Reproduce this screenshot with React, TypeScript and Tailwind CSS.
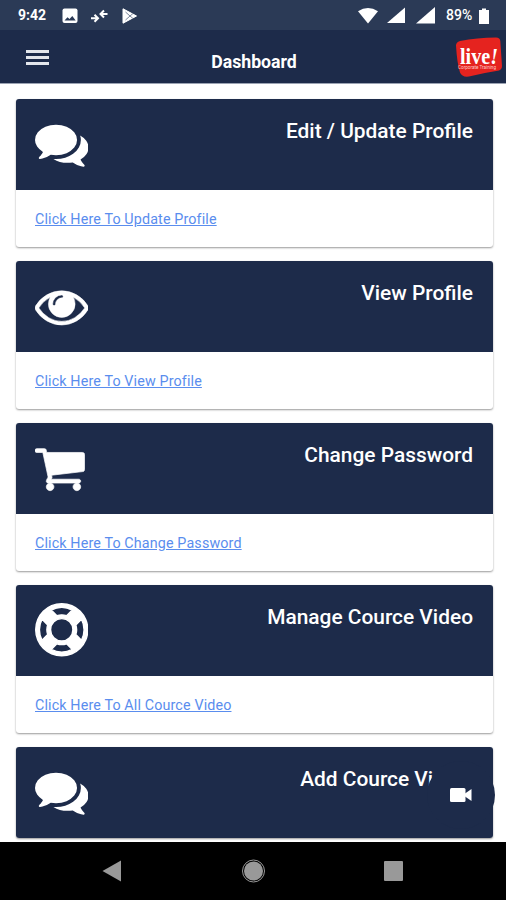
import type { ReactNode } from 'react';

type CardProps = {
  title: string;
  link?: string;
  icon: ReactNode;
};

type GlyphProps = {
  d: string;
  viewBox?: string;
  strokeWidth?: number;
};

function Glyph({ d, viewBox = '0 0 1792 1792', strokeWidth = 0 }: GlyphProps) {
  return (
    <svg viewBox={viewBox} className="size-[53.5px] shrink-0" fill="currentColor">
      <path d={d} stroke="currentColor" strokeWidth={strokeWidth} />
    </svg>
  );
}

const comments =
  'M1408 768q0 139-94 257t-256.5 186.5-353.5 68.5q-86 0-176-16-124 88-278 128-36 9-86 16h-3q-11 0-20.5-8t-11.5-21q-1-3-1-6.5t.5-6.5 2-6l2.5-5 3.5-5.5 4-5 4.5-5 4-4.5q5-6 23-25t26-29.5 22.5-29 25-38.5 20.5-44q-124-72-195-177t-71-224q0-139 94-257t256.5-186.5 353.5-68.5 353.5 68.5 256.5 186.5 94 257zm384 256q0 120-71 224.5t-195 176.5q10 24 20.5 44t25 38.5 22.5 29 26 29.5 23 25q1 1 4 4.5t4.5 5 4 5 3.5 5.5l2.5 5 2 6 .5 6.5-1 6.5q-3 14-13 22t-22 7q-50-7-86-16-154-40-278-128-90 16-176 16-271 0-472-132 58 4 88 4 161 0 309-45t264-129q125-92 192-212t67-254q0-77-23-152 129 71 204 178t75 230z';
const eye =
  'M1664 960q-152-236-381-353 61 104 61 225 0 185-131.5 316.5t-316.5 131.5-316.5-131.5-131.5-316.5q0-121 61-225-229 117-381 353 133 205 333.5 326.5t434.5 121.5 434.5-121.5 333.5-326.5zm-720-384q0-20-14-34t-34-14q-125 0-214.5 89.5t-89.5 214.5q0 20 14 34t34 14 34-14 14-34q0-86 61-147t147-61q20 0 34-14t14-34zm848 384q0 34-20 69-140 230-376.5 368.5t-499.5 138.5-499.5-139-376.5-368q-20-35-20-69t20-69q140-229 376.5-368t499.5-139 499.5 139 376.5 368q20 35 20 69z';
const cart =
  'M704 1536q0 52-38 90t-90 38-90-38-38-90 38-90 90-38 90 38 38 90zm896 0q0 52-38 90t-90 38-90-38-38-90 38-90 90-38 90 38 38 90zm128-1088v512q0 24-16.5 42.5t-40.5 21.5l-1044 122q13 60 13 70 0 16-24 64h920q26 0 45 19t19 45-19 45-45 19h-1024q-26 0-45-19t-19-45q0-11 8-31.5t16-36 21.5-40 15.5-29.5l-177-823h-204q-26 0-45-19t-19-45 19-45 45-19h256q16 0 28.5 6.5t19.5 15.5 13 24.5 8 26 5.5 29.5 4.5 26h1201q26 0 45 19t19 45z';
const lifeRing =
  'M896 0q182 0 348 71t286 191 191 286 71 348-71 348-191 286-286 191-348 71-348-71-286-191-191-286-71-348 71-348 191-286 286-191 348-71zm0 128q-190 0-361 90l194 194q82-28 167-28t167 28l194-194q-171-90-361-90zm-678 1129l194-194q-28-82-28-167t28-167l-194-194q-90 171-90 361t90 361zm678 407q190 0 361-90l-194-194q-82 28-167 28t-167-28l-194 194q171 90 361 90zm0-384q159 0 271.5-112.5t112.5-271.5-112.5-271.5-271.5-112.5-271.5 112.5-112.5 271.5 112.5 271.5 271.5 112.5zm484-217l194 194q90-171 90-361t-90-361l-194 194q28 82 28 167t-28 167z';

const cards: CardProps[] = [
  { title: 'Edit / Update Profile', link: 'Click Here To Update Profile', icon: <Glyph d={comments} /> },
  { title: 'View Profile', link: 'Click Here To View Profile', icon: <Glyph d={eye} viewBox="0 -8 1792 1792" strokeWidth={16} /> },
  { title: 'Change Password', link: 'Click Here To Change Password', icon: <Glyph d={cart} viewBox="70 0 1792 1792" strokeWidth={24} /> },
  { title: 'Manage Cource Video', link: 'Click Here To All Cource Video', icon: <Glyph d={lifeRing} viewBox="-24 -24 1840 1840" strokeWidth={48} /> },
  { title: 'Add Cource Video', icon: <Glyph d={comments} /> },
];

function Card({ title, link, icon }: CardProps) {
  return (
    <section className="group shrink-0 overflow-hidden rounded-[3px] bg-white shadow-[0_1px_2px_rgba(0,0,0,0.4)]">
      <div className="flex h-[90.6px] items-start justify-between bg-[#1d2b4a] pt-[18px] pr-5 pl-[18.5px] text-white group-last:pr-[25px]">
        {icon}
        <h2 className="text-[20.9px] leading-7 font-medium whitespace-nowrap">{title}</h2>
      </div>
      {link ? (
        <div className="flex h-[57.2px] items-center pt-px pl-[19px]">
          <a href="#" className="text-[14.3px] leading-5 tracking-[0.14px] text-[#5a8dee] underline">
            {link}
          </a>
        </div>
      ) : null}
    </section>
  );
}

function StatusBar() {
  return (
    <div className="flex h-[30px] shrink-0 items-center justify-between bg-[#2b3a56] pt-px pr-[17px] pl-[18px] text-white">
      <div className="flex items-center">
        <span className="w-[44px] text-[14px] font-bold">9:42</span>
        <svg width="16" height="16" viewBox="0 0 16 16">
          <rect x="0.5" y="0.5" width="15" height="14.5" rx="2" fill="white" />
          <path d="M2.5 12.5 5.5 9.2l2 1.8L10.3 8l3.4 4.5z" fill="#2b3a56" />
        </svg>
        <svg width="17" height="16" viewBox="0 0 17 16" className="ml-[13px]" fill="none" stroke="white" strokeWidth="2">
          <path d="M0 10.2h6M3.5 6.7 7 10.2l-3.5 3.5M16.5 6h-6M13 2.500 9.500 6l3.500 3.500" />
        </svg>
        <svg width="17" height="16" viewBox="0 0 17 16" className="ml-[13px]">
          <path d="M2 .8 15.500 8 2 15.200z" fill="white" stroke="white" strokeLinejoin="round" />
          <path d="M4.500 4 9 8l-4.500 4M9 8l3-2.500M9 8l3 2.500" stroke="#7b879c" strokeWidth="1" fill="none" />
        </svg>
      </div>
      <div className="flex items-center">
        <svg width="20" height="16" viewBox="0 0 20 16" fill="white">
          <path d="M0 3.2Q10-3.2 20 3.2L10 15.5z" />
        </svg>
        <svg width="18" height="17" viewBox="0 0 19 17" className="ml-[9px]" fill="white">
          <path d="M0 16.5 19 0v16.5z" />
        </svg>
        <svg width="19" height="17" viewBox="0 0 19 17" className="ml-[11px]" fill="white">
          <path d="M0 16.5 19 0v16.5z" />
        </svg>
        <span className="ml-[11px] w-[33px] text-[14px] font-medium">89%</span>
        <svg width="10" height="16" viewBox="0 0 10 16" fill="white">
          <path d="M3 .5h4V2h3v14H0V2h3z" />
        </svg>
      </div>
    </div>
  );
}

function Logo() {
  return (
    <svg width="48" height="40" viewBox="0 0 48 40">
      <path d="M5 4Q22 .5 41 .5q4 0 4.300 3.500L47 29q0 3-3 4.500Q28 36 14 39.500q-7 1-9-4Q2 26 1 8.500 1 5 5 4z" fill="#e5231f" />
      <text x="5" y="27" fill="white" fontFamily="Liberation Serif, serif" fontSize="23" fontWeight="700" textLength="38" lengthAdjust="spacingAndGlyphs">
        live<tspan fontStyle="italic">!</tspan>
      </text>
      <text x="3" y="32" fill="#ffc9c6" fontFamily="Roboto, sans-serif" fontSize="4.5" textLength="38" lengthAdjust="spacingAndGlyphs">
        Corporate Training
      </text>
    </svg>
  );
}

function Header() {
  return (
    <header className="grid h-[54px] shrink-0 grid-cols-[1fr_auto_1fr] items-start border-b border-[#9ba3b3] bg-[#1d2b4a] text-white">
      <button aria-label="Menu" className="mt-[19.5px] ml-[25.5px] flex w-[23px] flex-col gap-[3px]">
        <span className="h-[3px] bg-[#e3e6ec]" />
        <span className="h-[3px] bg-[#e3e6ec]" />
        <span className="h-[3px] bg-[#e3e6ec]" />
      </button>
      <h1 className="mt-5 ml-0.5 text-[17.7px] leading-6 font-bold">Dashboard</h1>
      <div className="mt-[7px] mr-[3px] justify-self-end">
        <Logo />
      </div>
    </header>
  );
}

function NavBar() {
  return (
    <nav className="grid h-[58px] shrink-0 grid-cols-[1fr_24px_1fr] items-center bg-black text-[#999]">
      <svg width="19" height="22" viewBox="0 0 19 22" className="mr-[120px] justify-self-end" fill="currentColor">
        <path d="M.5 11 19 .5v21z" />
      </svg>
      <svg width="24" height="24" viewBox="0 0 24 24" fill="currentColor">
        <circle cx="12.5" cy="12" r="9.5" />
        <circle cx="12.5" cy="12" r="11" fill="none" stroke="currentColor" />
      </svg>
      <span className="ml-[119px] h-5 w-[19px] rounded-[1px] bg-[#999]" />
    </nav>
  );
}

export default function App() {
  return (
    <div className="relative flex h-[900px] w-[506px] flex-col overflow-hidden bg-white font-['Roboto',sans-serif]">
      <StatusBar />
      <Header />
      <main className="flex min-h-0 flex-1 flex-col gap-[14.3px] overflow-hidden pt-[15px] pr-[13px] pl-4">
        {cards.map((card) => (
          <Card key={card.title} {...card} />
        ))}
      </main>
      <NavBar />
      <button
        aria-label="Video"
        className="absolute top-[761px] left-[427px] flex size-[68px] items-center justify-center rounded-full bg-[#1d2b4a] text-white"
      >
        <svg width="22" height="14" viewBox="0 0 22 14" fill="currentColor">
          <rect x="0" y="0" width="15.5" height="14" rx="1.5" />
          <path d="M15 5.500 21.500 1v12L15 8.500z" />
        </svg>
      </button>
    </div>
  );
}
